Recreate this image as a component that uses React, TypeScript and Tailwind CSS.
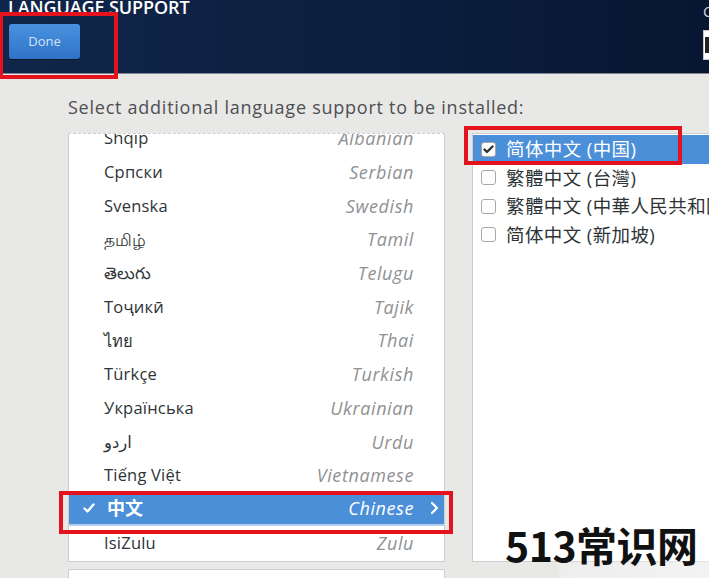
import React from "react";

const rows: [string, string][] = [
  ["Shqip", "Albanian"],
  ["Српски", "Serbian"],
  ["Svenska", "Swedish"],
  ["தமிழ்", "Tamil"],
  ["తెలుగు", "Telugu"],
  ["Тоҷикӣ", "Tajik"],
  ["ไทย", "Thai"],
  ["Türkçe", "Turkish"],
  ["Українська", "Ukrainian"],
  ["اردو", "Urdu"],
  ["Tiếng Việt", "Vietnamese"],
  ["中文", "Chinese"],
  ["IsiZulu", "Zulu"],
];

const locales: [string, boolean][] = [
  ["简体中文 (中国)", true],
  ["繁體中文 (台灣)", false],
  ["繁體中文 (中華人民共和國)", false],
  ["简体中文 (新加坡)", false],
];

const font = { fontFamily: '"Open Sans","Noto Sans","DejaVu Sans","Noto Sans CJK SC",sans-serif' };

export default function App() {
  return (
    <div
      className="relative w-[709px] h-[578px] overflow-hidden bg-[#e8e8e7]"
      style={font}
    >
      {/* header */}
      <div className="h-[74px] bg-gradient-to-r from-[#10264a] via-[#0b1f3f] to-[#071731] border-b border-[#7d8796] flex justify-between overflow-hidden">
        <div className="flex flex-col pl-[8px]">
          <div className="-mt-[3px] text-[18px] leading-[21px] font-semibold text-white tracking-[-0.1px]">
            LANGUAGE SUPPORT
          </div>
          <button className="mt-[6px] ml-[1px] w-[71px] h-[35px] rounded-[3px] bg-gradient-to-b from-[#4a92e0] to-[#2f73c6] text-[13px] text-[#d3e2f5] shadow-[0_1px_0_rgba(0,0,0,0.4)]">
            Done
          </button>
        </div>
        <div className="flex flex-col items-start w-[6px]">
          <div className="mt-[3px] text-[15px] leading-[16px] text-[#d0d6de]">C</div>
          <div className="mt-[11px] w-[12px] h-[30px] bg-white border border-[#c8c8c8] pl-[1px] pt-[6px]">
            <div className="w-[6px] h-[16px] bg-[#222]" />
          </div>
        </div>
      </div>

      {/* body */}
      <div className="pl-[68px] pt-[21px]">
        <div className="text-[18px] leading-[24px] text-[#4d4f51] tracking-[0.75px]">
          Select additional language support to be installed:
        </div>
        <div className="flex mt-[14px] gap-[27px]">
          {/* left column */}
          <div className="flex flex-col gap-[7px]">
            <div className="w-[377px] h-[429px] bg-white border border-[#cdcdcd] overflow-hidden" style={{ borderTopStyle: "dashed" }}>
              <div className="-mt-[12px]">
                {rows.map(([native, en]) => {
                  const sel = en === "Chinese";
                  return (
                    <div
                      key={en}
                      className={
                        sel
                          ? "h-[33.7px] flex items-center bg-[#4a8fd8] border-b-2 border-[#b4cfee] text-white"
                          : "h-[33.7px] flex items-center"
                      }
                    >
                      <div className="w-[35px] flex justify-center pl-[4px]">
                        {sel && (
                          <svg width="12" height="10" viewBox="0 0 12 10">
                            <path d="M1.5 5.5 L4.5 8.5 L10.5 1.5" stroke="white" strokeWidth="2.4" fill="none" strokeLinecap="round" strokeLinejoin="round" />
                          </svg>
                        )}
                      </div>
                      <div
                        className={
                          sel
                            ? "flex-1 pl-[3px] text-[18px] font-bold text-white"
                            : "flex-1 text-[16.5px] text-[#2e3436] tracking-[0.2px]"
                        }
                      >
                        {native}
                      </div>
                      <div
                        className={
                          sel
                            ? "italic text-[18px] tracking-[0.6px] text-white"
                            : "italic text-[18px] tracking-[0.6px] text-[#8f9193]"
                        }
                      >
                        {en}
                      </div>
                      <div className="w-[30px] flex justify-end pr-[5px]">
                        {sel && (
                          <svg width="9" height="14" viewBox="0 0 9 14">
                            <path d="M2 2 L7 7 L2 12" stroke="white" strokeWidth="2.2" fill="none" strokeLinecap="round" strokeLinejoin="round" />
                          </svg>
                        )}
                      </div>
                    </div>
                  );
                })}
              </div>
            </div>
            <div className="w-[377px] h-[20px] bg-white border border-[#cdcdcd] rounded-[2px]" />
          </div>

          {/* right column */}
          <div className="flex-1 h-[429px] bg-white border border-[#cdcdcd] pt-[1px]">
            {locales.map(([label, checked]) => (
              <div
                key={label}
                className={
                  checked
                    ? "h-[28.5px] flex items-center gap-[10px] pl-[8px] bg-[#4a8fd8] text-white"
                    : "h-[28.5px] flex items-center gap-[10px] pl-[8px] text-[#2e3436]"
                }
              >
                <div className="w-[15px] h-[15px] rounded-[3px] border border-[#a8a8a8] bg-white flex items-center justify-center shrink-0">
                  {checked && (
                    <svg width="11" height="9" viewBox="0 0 11 9">
                      <path d="M1.5 4.5 L4 7 L9.5 1.5" stroke="#2e3436" strokeWidth="2.4" fill="none" strokeLinecap="round" strokeLinejoin="round" />
                    </svg>
                  )}
                </div>
                <div className="text-[18.5px] tracking-[0.4px] whitespace-nowrap">{label}</div>
              </div>
            ))}
          </div>
        </div>
      </div>

      {/* watermark */}
      <div className="absolute right-0 bottom-0 w-[150px] h-[80px] bg-gradient-to-tl from-[rgba(255,255,255,0.5)] to-transparent" />
      <div
        className="absolute left-[505px] top-[520px] text-[41px] font-bold text-[#111] leading-[48px] tracking-[-0.5px]"
        style={{ fontFamily: '"Noto Sans CJK SC","Noto Sans",sans-serif' }}
      >
        513常识网
      </div>

      {/* red annotation boxes */}
      <div className="absolute left-[-1px] top-[12px] w-[119px] h-[67px] border-[4px] border-[#e3121c]" />
      <div className="absolute left-[59px] top-[491px] w-[394px] h-[43px] border-[4px] border-[#e3121c]" />
      <div className="absolute left-[464px] top-[126px] w-[218px] h-[39px] border-[4px] border-[#e3121c]" />
    </div>
  );
}
